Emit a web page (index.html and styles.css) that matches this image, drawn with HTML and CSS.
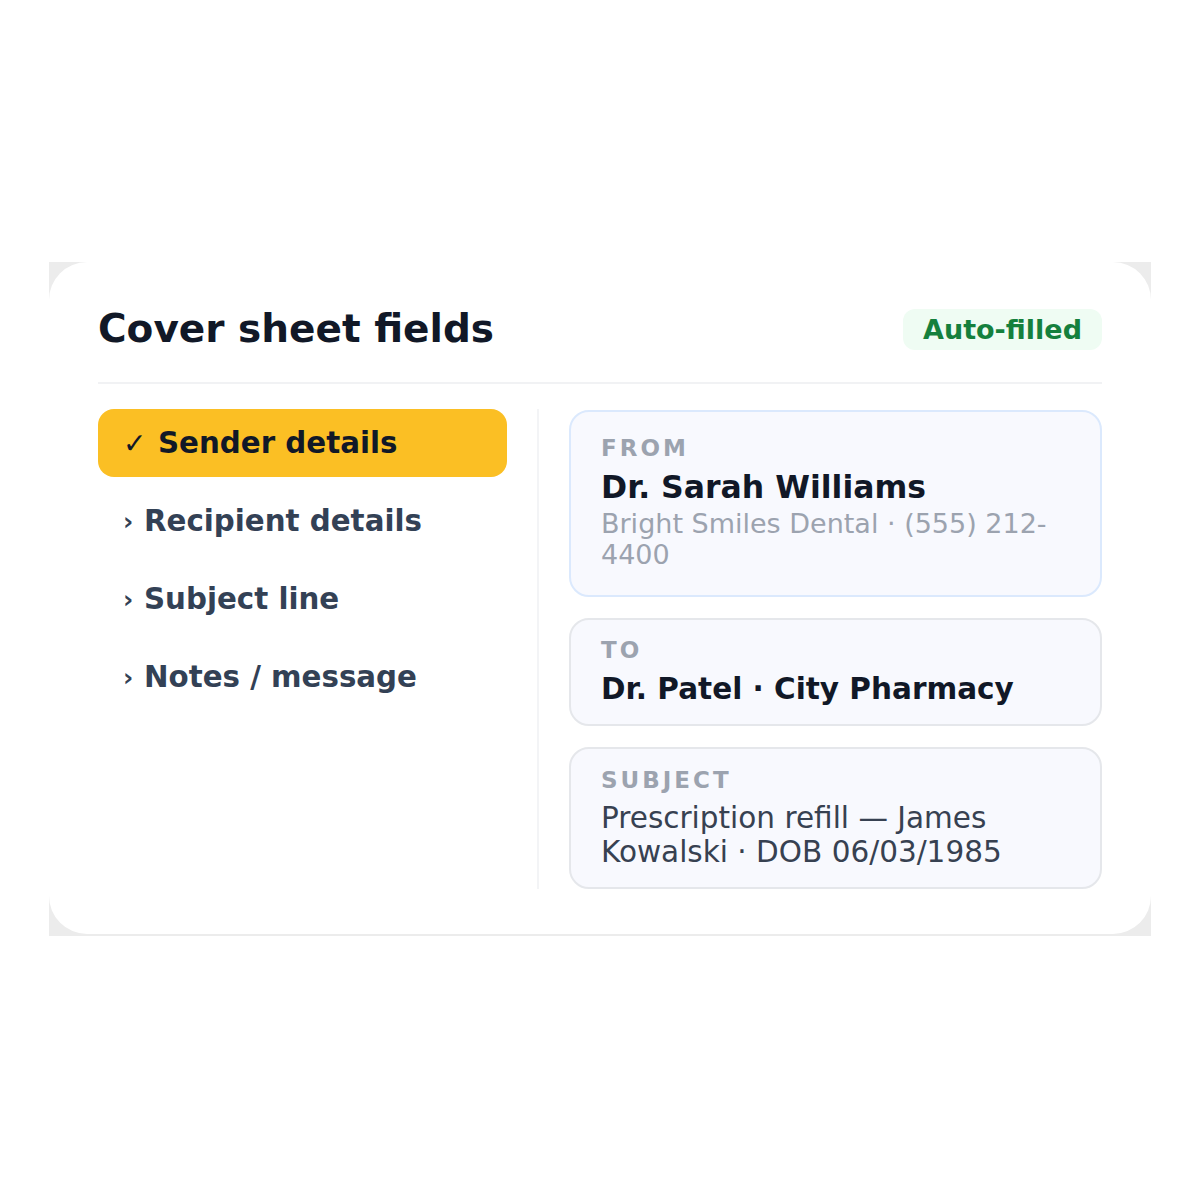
FILE: index.html
```html
<!DOCTYPE html>
<html lang="en">
<head>
    <meta charset="UTF-8">
    <meta name="viewport" content="width=device-width, initial-scale=1.0">
    <title>Cover sheet fields</title>
    <link rel="stylesheet" href="styles.css">
</head>
<body>
    <div class="frame">
        <div class="card">
            <div class="card-header">
                <h2>Cover sheet fields</h2>
                <span class="badge">Auto-filled</span>
            </div>

            <div class="card-body">
                <ul class="steps">
                    <li class="step active"><span class="mark">✓</span>Sender details</li>
                    <li class="step"><span class="mark">›</span>Recipient details</li>
                    <li class="step"><span class="mark">›</span>Subject line</li>
                    <li class="step"><span class="mark">›</span>Notes / message</li>
                </ul>

                <div class="divider"></div>

                <div class="fields">
                    <div class="field current">
                        <div class="field-label">FROM</div>
                        <div class="field-name big">Dr. Sarah Williams</div>
                        <div class="field-sub">Bright Smiles Dental · (555) 212-4400</div>
                    </div>
                    <div class="field">
                        <div class="field-label">TO</div>
                        <div class="field-name">Dr. Patel · City Pharmacy</div>
                    </div>
                    <div class="field subject">
                        <div class="field-label">SUBJECT</div>
                        <div class="field-text">Prescription refill — James Kowalski · DOB 06/03/1985</div>
                    </div>
                </div>
            </div>
        </div>
    </div>
</body>
</html>
```

FILE: styles.css
```css
body {
    font-family: "DejaVu Sans", sans-serif;
    margin: 0;
    background-color: #ffffff;
}

.frame {
    width: 1102px;
    margin: 262px 0 0 49px;
    padding-bottom: 2px;
    background-color: #ececec;
}

.card {
    background-color: #ffffff;
    border-radius: 38px;
    padding: 0 49px 45px;
}

.card-header {
    display: flex;
    align-items: center;
    justify-content: space-between;
    padding: 44px 0 30px;
    border-bottom: 2px solid #f1f2f4;
}

h2 {
    margin: 0;
    font-size: 39px;
    line-height: 46px;
    color: #111827;
}

.badge {
    background-color: #effcf3;
    color: #15803d;
    font-weight: bold;
    font-size: 27px;
    line-height: 31px;
    padding: 5px 20px;
    border-radius: 12px;
}

.card-body {
    display: grid;
    grid-template-columns: 409px 2px 1fr;
    gap: 30px;
    margin-top: 25px;
}

.steps {
    list-style: none;
    margin: 0;
    padding: 0;
    display: flex;
    flex-direction: column;
    gap: 10px;
}

.step {
    display: flex;
    align-items: center;
    height: 68px;
    padding: 0 25px;
    border-radius: 16px;
    font-size: 29.3px;
    font-weight: bold;
    color: #334155;
}

.step .mark {
    width: 21px;
    font-size: 25px;
}

.step.active {
    background-color: #fbbf24;
    color: #111827;
}

.step.active .mark {
    width: 35px;
    font-size: 28px;
}

.divider {
    background-color: #f3f4f6;
}

.fields {
    display: flex;
    flex-direction: column;
    gap: 21px;
    padding-top: 1px;
}

.field {
    background-color: #f8f9fe;
    border: 2px solid #e5e7eb;
    border-radius: 20px;
    padding: 15px 30px 15px;
}

.field.current {
    border-color: #dbe9fd;
    padding: 21px 30px 25px;
}

.field.subject {
    padding-top: 16px;
    padding-bottom: 18px;
}

.field-label {
    font-size: 23px;
    font-weight: bold;
    letter-spacing: 3px;
    color: #9ca3af;
    line-height: 30px;
}

.field-name {
    font-size: 29.5px;
    font-weight: bold;
    color: #111827;
    line-height: 40px;
    margin-top: 4px;
}

.field-name.big {
    font-size: 31.5px;
}

.field-sub {
    font-size: 27px;
    color: #9ca3af;
    line-height: 31px;
    margin-top: 1px;
}

.field-text {
    font-size: 29.5px;
    color: #374151;
    line-height: 33.5px;
    margin-top: 7px;
}
```
